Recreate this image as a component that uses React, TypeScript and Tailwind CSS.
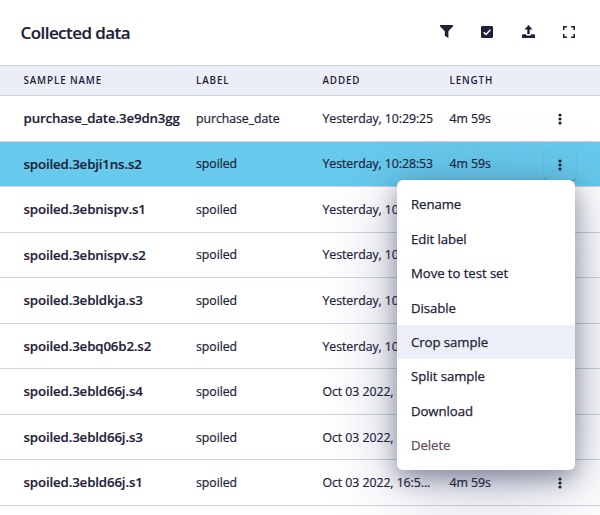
type Sample = { name: string; label: string; added: string; length: string };

const samples: Sample[] = [
  { name: "purchase_date.3e9dn3gg", label: "purchase_date", added: "Yesterday, 10:29:25", length: "4m 59s" },
  { name: "spoiled.3ebji1ns.s2", label: "spoiled", added: "Yesterday, 10:28:53", length: "4m 59s" },
  { name: "spoiled.3ebnispv.s1", label: "spoiled", added: "Yesterday, 10:28:53", length: "4m 59s" },
  { name: "spoiled.3ebnispv.s2", label: "spoiled", added: "Yesterday, 10:28:53", length: "4m 59s" },
  { name: "spoiled.3ebldkja.s3", label: "spoiled", added: "Yesterday, 10:28:53", length: "4m 59s" },
  { name: "spoiled.3ebq06b2.s2", label: "spoiled", added: "Yesterday, 10:28:53", length: "4m 59s" },
  { name: "spoiled.3ebld66j.s4", label: "spoiled", added: "Oct 03 2022, 16:5...", length: "4m 59s" },
  { name: "spoiled.3ebld66j.s3", label: "spoiled", added: "Oct 03 2022, 16:5...", length: "4m 59s" },
  { name: "spoiled.3ebld66j.s1", label: "spoiled", added: "Oct 03 2022, 16:5...", length: "4m 59s" },
];

const actions = ["Rename", "Edit label", "Move to test set", "Disable", "Crop sample", "Split sample", "Download", "Delete"];

const columns = "grid grid-cols-[172.5px_126.5px_127px_94px_32px] items-center pl-[23.5px]";

function FilterIcon() {
  return (
    <svg width="13" height="13" viewBox="0 0 13 13" fill="currentColor">
      <path d="M0 0h13v1.3L8.4 6.2V13L4.8 10.7V6.2L0 1.3z" />
    </svg>
  );
}

function CheckIcon() {
  return (
    <svg width="12" height="12" viewBox="0 0 12 12">
      <rect width="12" height="12" rx="1.3" fill="currentColor" />
      <path d="M2.7 6.2l2.3 2.3 4.4-4.7" fill="none" stroke="#fff" strokeWidth="1.5" />
    </svg>
  );
}

function UploadIcon() {
  return (
    <svg width="13" height="13" viewBox="0 0 14 13" preserveAspectRatio="none" fill="currentColor">
      <path d="M7 0l4.3 4.6H8.3V9H5.7V4.6H2.7z" />
      <path d="M.7 9.2h3.8v1.2h5V9.2h3.8l.7.7V13H0V9.9z" />
    </svg>
  );
}

function ExpandIcon() {
  return (
    <svg width="12" height="12" viewBox="0 0 12 12" fill="none" stroke="currentColor" strokeWidth="1.6">
      <path d="M.8 4V.8H4M8 .8h3.2V4M11.2 8v3.2H8M4 11.2H.8V8" />
    </svg>
  );
}

function MoreIcon() {
  return (
    <svg width="4" height="12" viewBox="0 0 4 12" fill="currentColor">
      <circle cx="2" cy="2" r="1.6" />
      <circle cx="2" cy="6" r="1.6" />
      <circle cx="2" cy="10" r="1.6" />
    </svg>
  );
}

function ActionMenu() {
  return (
    <div className="absolute top-[38px] right-[25px] z-10 h-[290.5px] w-[178.5px] rounded-[6px] bg-white pt-[7.5px] shadow-[0_8px_22px_rgba(30,32,65,0.4),0_14px_70px_rgba(50,60,110,0.36)]">
      {actions.map((action) => (
        <div
          key={action}
          className={`flex h-[34.4px] items-center pt-[2px] pl-[14.5px] text-[13.2px] font-medium tracking-[-0.07px] [-webkit-text-stroke:0.25px] ${
            action === "Crop sample" ? "bg-[#eceff7]" : ""
          } ${action === "Delete" ? "text-[#65505f]" : ""}`}
        >
          {action}
        </div>
      ))}
    </div>
  );
}

export default function App() {
  return (
    <div className="h-[515px] w-[600px] overflow-hidden bg-white font-['Open_Sans','Noto_Sans',sans-serif] text-[#1d2138]">
      <header className="flex h-[65px] items-center justify-between pr-[25px] pl-[20.5px]">
        <h1 className="text-[17px] font-semibold tracking-[-0.56px] [-webkit-text-stroke:0.15px]">Collected data</h1>
        <div className="flex items-center gap-[28.5px] pb-[2px]">
          <FilterIcon />
          <CheckIcon />
          <UploadIcon />
          <ExpandIcon />
        </div>
      </header>
      <div className={`${columns} h-[31px] border-y border-[#cdd1dc] bg-[#eceef7] pt-[1px] text-[9.8px] font-semibold tracking-[0.88px]`}>
        <span>SAMPLE NAME</span>
        <span>LABEL</span>
        <span>ADDED</span>
        <span>LENGTH</span>
      </div>
      {samples.map((sample, index) => (
        <div
          key={sample.name}
          className={`relative ${columns} h-[45.55px] border-b border-[#ced3dc] pt-[1.6px] text-[12.3px] tracking-[-0.05px] whitespace-nowrap ${
            index === 1 ? "bg-[#67caec]" : ""
          }`}
        >
          <span className="text-[13.3px] font-semibold tracking-[-0.15px] [-webkit-text-stroke:0.15px]">{sample.name}</span>
          <span className="[-webkit-text-stroke:0.2px]">{sample.label}</span>
          <span className="[-webkit-text-stroke:0.2px]">{sample.added}</span>
          <span className="[-webkit-text-stroke:0.2px]">{sample.length}</span>
          <span
            className={`flex h-[30px] items-center justify-center ${
              index === 1 ? "rounded-[4px] shadow-[0_1px_1px_rgba(55,75,100,0.55)]" : ""
            }`}
          >
            <MoreIcon />
          </span>
          {index === 1 && <ActionMenu />}
        </div>
      ))}
    </div>
  );
}
